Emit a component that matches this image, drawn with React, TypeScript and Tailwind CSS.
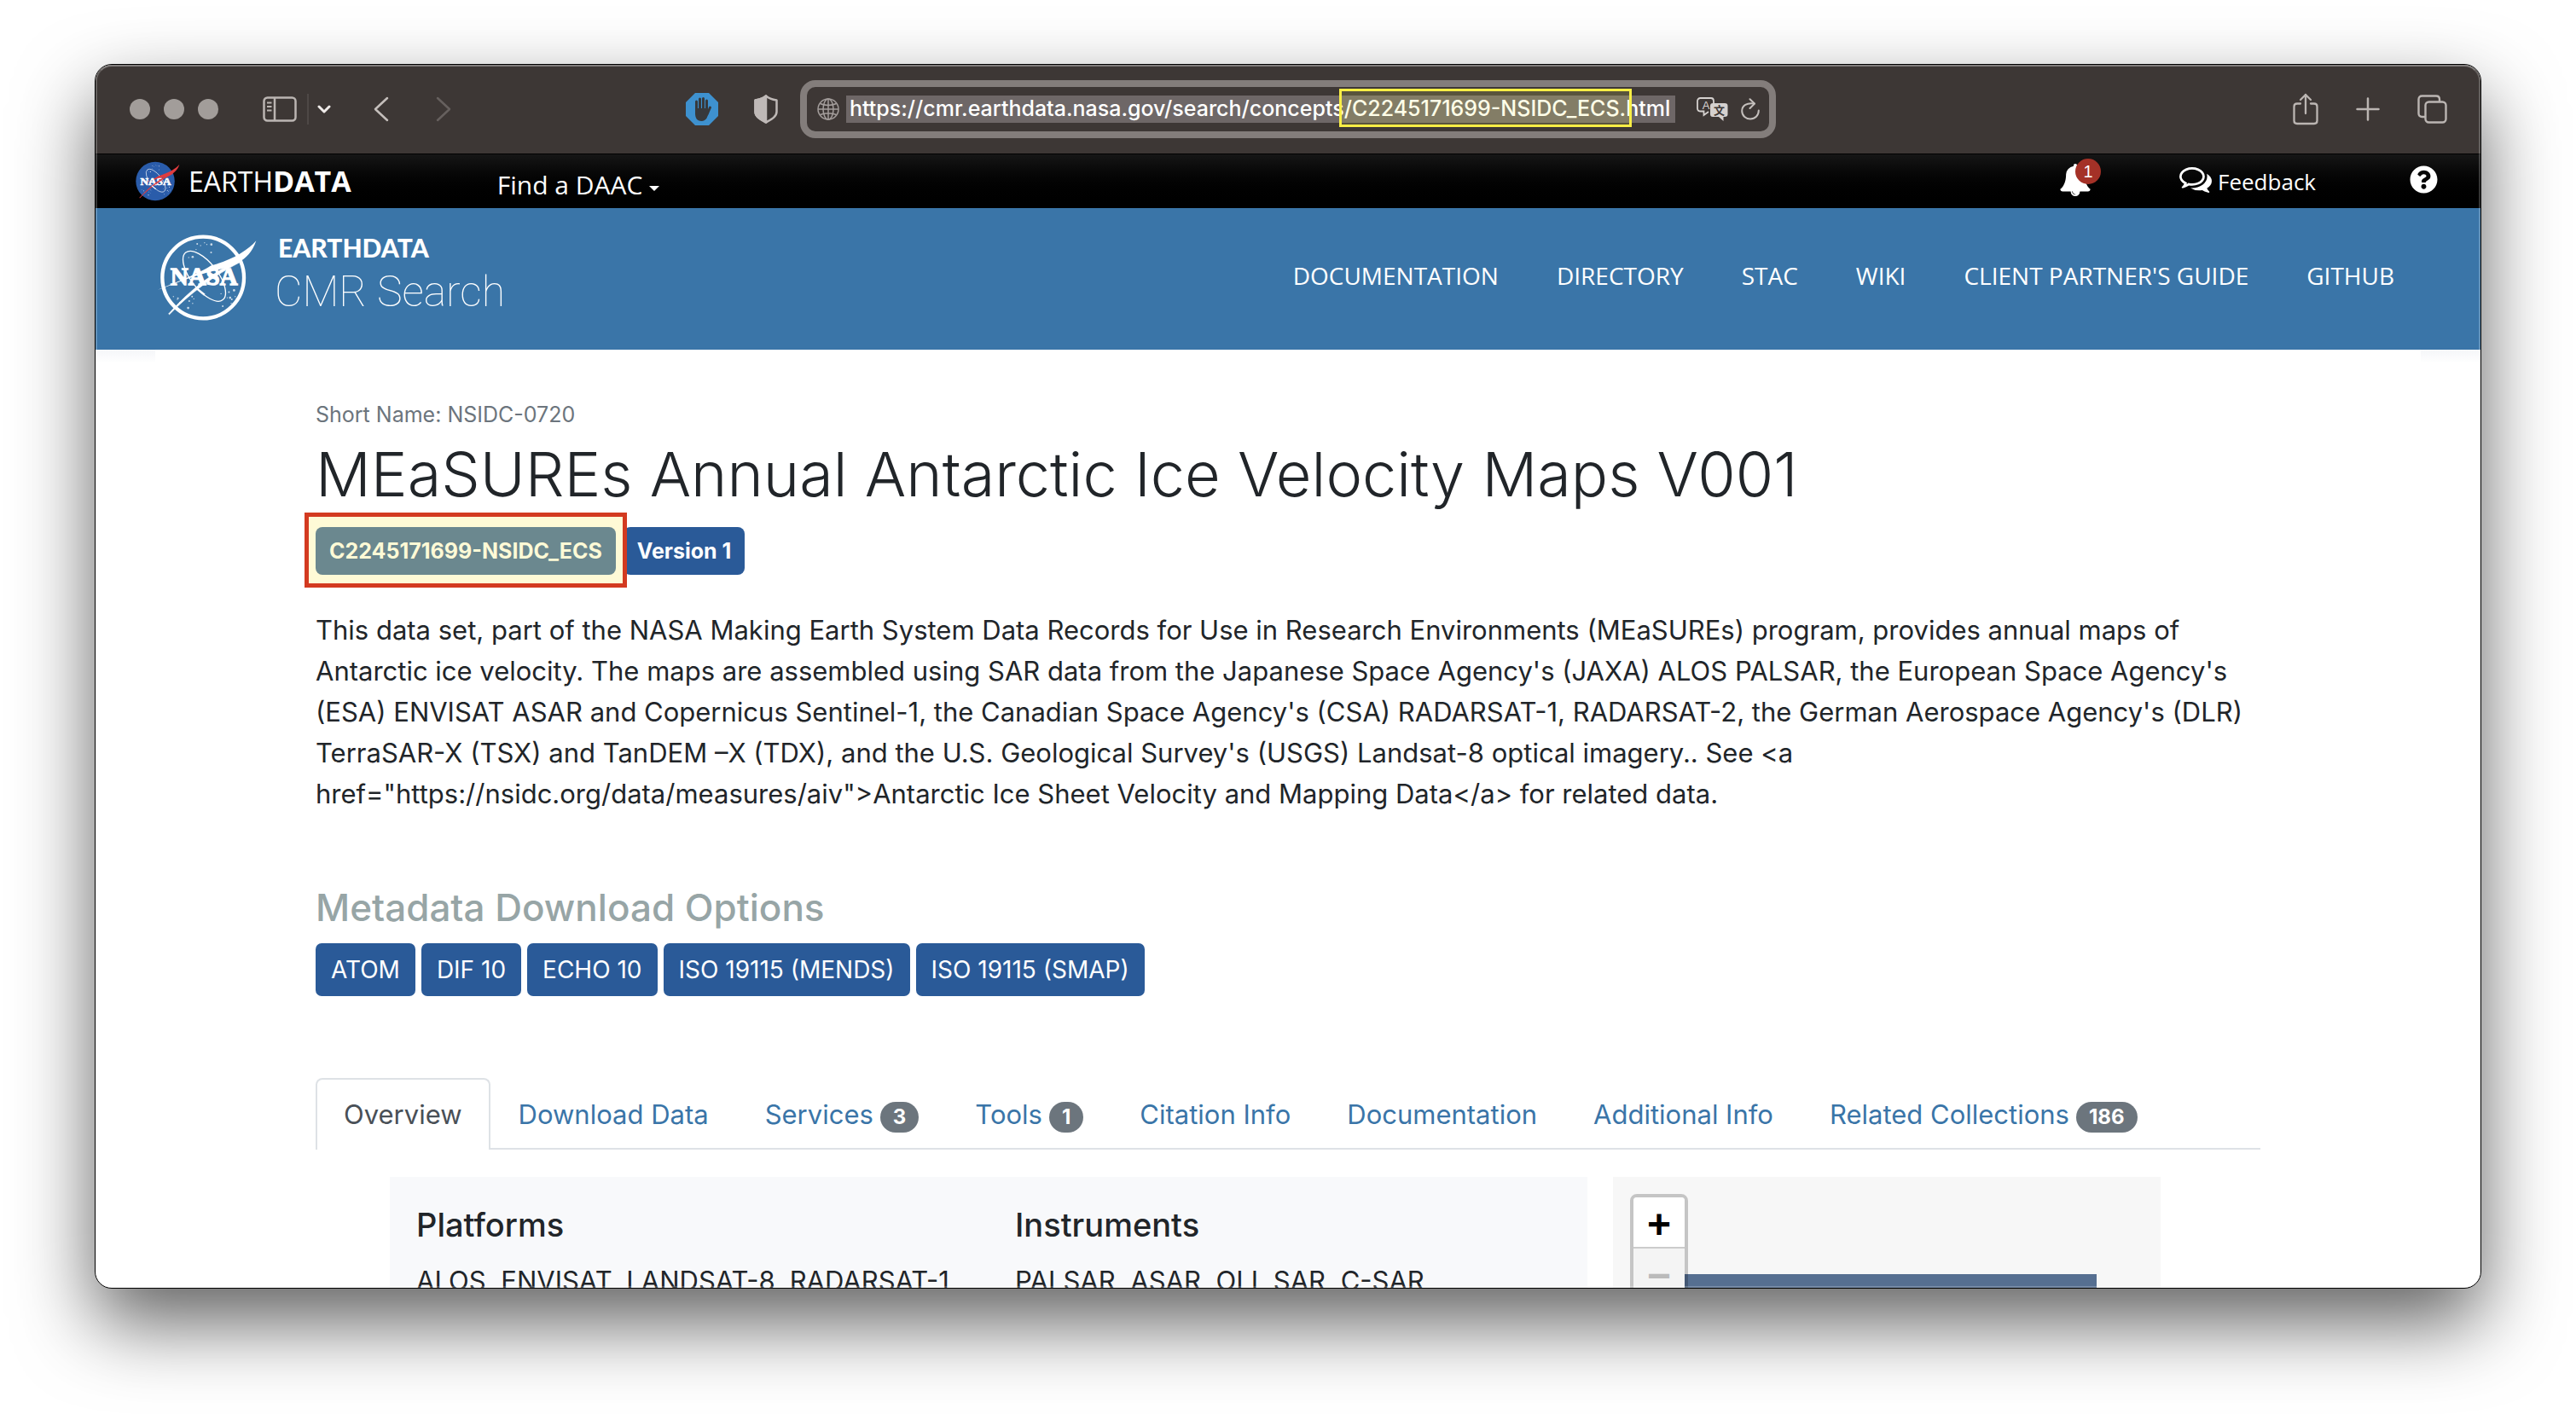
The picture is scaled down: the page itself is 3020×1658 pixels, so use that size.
import React from "react";
import { FaQuestionCircle } from "react-icons/fa";

const ABSTRACT =
  "This data set, part of the NASA Making Earth System Data Records for Use in Research Environments (MEaSUREs) program, provides annual maps of Antarctic ice velocity. The maps are assembled using SAR data from the Japanese Space Agency's (JAXA) ALOS PALSAR, the European Space Agency's (ESA) ENVISAT ASAR and Copernicus Sentinel-1, the Canadian Space Agency's (CSA) RADARSAT-1, RADARSAT-2, the German Aerospace Agency's (DLR) TerraSAR-X (TSX) and TanDEM –X (TDX), and the U.S. Geological Survey's (USGS) Landsat-8 optical imagery.. See <a href=\"https://nsidc.org/data/measures/aiv\">Antarctic Ice Sheet Velocity and Mapping Data</a> for related data.";

const NAV = ["DOCUMENTATION", "DIRECTORY", "STAC", "WIKI", "CLIENT PARTNER'S GUIDE", "GITHUB"];
const DOWNLOADS = ["ATOM", "DIF 10", "ECHO 10", "ISO 19115 (MENDS)", "ISO 19115 (SMAP)"];
const TABS: { label: string; count?: number }[] = [
  { label: "Overview" },
  { label: "Download Data" },
  { label: "Services", count: 3 },
  { label: "Tools", count: 1 },
  { label: "Citation Info" },
  { label: "Documentation" },
  { label: "Additional Info" },
  { label: "Related Collections", count: 186 },
];

const STARS = [
  [142, 36, 3], [154, 42, 2], [168, 32, 2], [176, 38, 2], [192, 38, 4], [138, 56, 2], [191, 66, 3], [126, 82, 4], [112, 84, 2],
  [58, 222, 2], [74, 228, 3], [80, 242, 2], [72, 232, 2], [114, 238, 3], [124, 222, 3], [130, 230, 2], [110, 262, 4], [126, 246, 2],
  [226, 212, 2], [254, 206, 3], [258, 226, 4], [272, 200, 4], [264, 232, 3], [276, 222, 2], [232, 256, 3], [248, 226, 2], [262, 246, 2], [280, 230, 2],
];

const WING = "M3 198C60 175 150 140 190 113C260 95 320 60 350 25C337 66 312 88 290 100C250 122 200 130 160 142C100 160 60 178 3 198Z";

function Meatball({ color, className }: { color?: boolean; className: string }) {
  const wing = color ? "#e03c3f" : "#fff";
  return (
    <svg viewBox="0 0 352 310" className={className} role="img" aria-label="NASA">
      {color ? (
        <circle cx="163" cy="155" r="150" fill="#2a5caa" />
      ) : (
        <circle cx="163" cy="155" r="144" fill="none" stroke="#fff" strokeWidth="13" />
      )}
      {STARS.map(([x, y, r]) => (
        <circle key={`${x}-${y}`} cx={x} cy={y} r={r} fill="#fff" opacity="0.75" />
      ))}
      <ellipse cx="167" cy="150" rx="47" ry="106" transform="rotate(-38 167 150)" fill="none" stroke="#fff" strokeWidth="4" />
      {color && <path d={WING} fill={wing} />}
      <text x="166" y="182" textAnchor="middle" fontSize="87" fontWeight="700" fill="#fff" stroke="#fff" strokeWidth="4" fontFamily="'Liberation Serif', serif">
        NASA
      </text>
      {!color && <path d={WING} fill={wing} />}
      <path d="M41 283C110 205 190 140 292 90L298 98C200 148 115 212 44 285Z" fill={wing} stroke={wing} strokeWidth="2" />
      <path d="M136 190L168 216" stroke="#fff" strokeWidth="7" />
    </svg>
  );
}

function HandBlocker() {
  return (
    <svg viewBox="0 0 38 38" className="h-[38px] w-[38px]" aria-hidden="true">
      <path d="M11 0H27L38 11V27L27 38H11L0 27V11Z" fill="#3e91cf" />
      <g stroke="#37393c" strokeWidth="3" strokeLinecap="round" fill="none">
        <path d="M12.500 20V10M16.500 18V7M20.500 18V6.500M24.500 19V9" />
        <path d="M25 25L28.500 17" />
      </g>
      <path d="M11 18H26V22L27 21C26 28 24 33 18.500 33C13 33 11 29 11 24Z" fill="#37393c" />
    </svg>
  );
}

function Toolbar() {
  return (
    <div className="grid h-[104px] shrink-0 grid-cols-[1fr_auto_1fr] items-center bg-[#3d3735] text-[#bbb5b2]">
      <div className="flex items-center pl-10 pr-[26px]">
        <div className="flex gap-4">
          <button aria-label="Close" className="h-6 w-6 rounded-full bg-[#a29d9a]" />
          <button aria-label="Minimize" className="h-6 w-6 rounded-full bg-[#a29d9a]" />
          <button aria-label="Zoom" className="h-6 w-6 rounded-full bg-[#a29d9a]" />
        </div>
        <button aria-label="Sidebar" className="ml-[52px]">
          <svg viewBox="0 0 40 30" className="h-[30px] w-10" fill="none" stroke="currentColor" strokeWidth="2.500">
            <rect x="1.500" y="1.500" width="37" height="27" rx="4" />
            <path d="M14 1.500V28.500" />
            <path d="M5 7.500H10.500M5 12H10.500M5 16.500H10.500" strokeWidth="2" />
          </svg>
        </button>
        <span className="ml-3 h-9 w-0.5 bg-[#4e4846]" />
        <button aria-label="Tab groups" className="ml-[10px]">
          <svg viewBox="0 0 16 10" className="h-[10px] w-4" fill="none" stroke="#f0ecea" strokeWidth="3" strokeLinecap="round" strokeLinejoin="round">
            <path d="M2 2L8 8L14 2" />
          </svg>
        </button>
        <button aria-label="Back" className="ml-[50px]">
          <svg viewBox="0 0 18 30" className="h-[30px] w-[18px]" fill="none" stroke="#c4bebb" strokeWidth="2.500" strokeLinecap="round" strokeLinejoin="round">
            <path d="M16 2L2 15L16 28" />
          </svg>
        </button>
        <button aria-label="Forward" className="ml-[55px]">
          <svg viewBox="0 0 18 30" className="h-[30px] w-[18px]" fill="none" stroke="#66605e" strokeWidth="2.500" strokeLinecap="round" strokeLinejoin="round">
            <path d="M2 2L16 15L2 28" />
          </svg>
        </button>
        <button aria-label="Content blocker" className="ml-auto">
          <HandBlocker />
        </button>
        <button aria-label="Privacy report" className="ml-[42px]">
          <svg viewBox="0 0 28 34" className="h-[34px] w-7" fill="none" stroke="#bfb9b7" strokeWidth="2.500" strokeLinejoin="round">
            <path d="M14 1.500C18 5 23 6 26.500 6.500V20C26.500 26 20 29 14 32.500C8 29 1.500 26 1.500 20V6.500C5 6 10 5 14 1.500Z" />
            <path d="M14 1.500C10 5 5 6 1.500 6.500V20C1.500 26 8 29 14 32.500Z" fill="#bfb9b7" />
          </svg>
        </button>
      </div>

      <div className="flex h-[68px] w-[1144px] items-center rounded-[18px] border-8 border-[#837d7b] pl-3 pr-[11px]">
        <svg viewBox="0 0 26 26" className="h-[26px] w-[26px]" fill="none" stroke="#a39d9b" strokeWidth="1.500" aria-hidden="true">
          <circle cx="13" cy="13" r="12" />
          <ellipse cx="13" cy="13" rx="6" ry="12" />
          <path d="M13 1V25M1 13H25M3.500 6.500C9 9 17 9 22.500 6.500M3.500 19.500C9 17 17 17 22.500 19.500" />
        </svg>
        <div className="relative ml-2 flex-1">
          <input
            aria-label="Address"
            readOnly
            value="https://cmr.earthdata.nasa.gov/search/concepts/C2245171699-NSIDC_ECS.html"
            className="block h-8 w-full bg-[#6e6767] pl-1 text-[25px] font-medium text-white outline-none"
          />
          <div className="pointer-events-none absolute -top-2 left-[578px] h-[45px] w-[343px] border-[3px] border-[#f8ee45] bg-[#ffff64]/15" />
        </div>
        <button aria-label="Translate" className="ml-[25px]">
          <svg viewBox="0 0 37 28" className="h-7 w-[37px]" fontFamily="'Liberation Sans', 'Noto Sans CJK SC', sans-serif">
            <path d="M4.500 1H17C19 1 20 2.500 20 4.500V7M14 17L8.500 21V16.500H5C2.500 16.500 1 15.500 1 13V4.500C1 2.500 2.500 1 4.500 1" fill="none" stroke="#d5d1cf" strokeWidth="1.800" />
            <text x="11" y="13.500" textAnchor="middle" fontSize="13" fill="#d5d1cf">A</text>
            <path d="M19 7H33C35.500 7 36.500 8 36.500 10V20C36.500 22 35.500 23 33 23H31.500V28L26 23H19C17 23 16 22 16 20V10C16 8 17 7 19 7Z" fill="#d5d1cf" />
            <text x="26.500" y="20" textAnchor="middle" fontSize="13" fontWeight="700" fill="#3d3735">文</text>
          </svg>
        </button>
        <button aria-label="Reload" className="ml-[15px]">
          <svg viewBox="0 0 22 26" className="h-[26px] w-[22px]" fill="none" stroke="#c4bfbc" strokeWidth="2" strokeLinecap="round" strokeLinejoin="round">
            <path d="M15.500 6.500C7 5 1.200 9 1.200 15C1.200 21 6 24.500 11 24.500C16.500 24.500 20.800 20.500 20.800 14.500" />
            <path d="M10.500 1.200L16 6.500L10.500 12" />
          </svg>
        </button>
      </div>

      <div className="flex items-center justify-end gap-11 pr-[39px]">
        <button aria-label="Share">
          <svg viewBox="0 0 30 38" className="h-[38px] w-[30px]" fill="none" stroke="currentColor" strokeWidth="2.300" strokeLinecap="round" strokeLinejoin="round">
            <path d="M9 12.500H5C3 12.500 1.500 14 1.500 16V32.500C1.500 34.500 3 36 5 36H25C27 36 28.500 34.500 28.500 32.500V16C28.500 14 27 12.500 25 12.500H21" />
            <path d="M15 24V2M9 8L15 2L21 8" />
          </svg>
        </button>
        <button aria-label="New tab">
          <svg viewBox="0 0 28 28" className="h-7 w-7" fill="none" stroke="currentColor" strokeWidth="2.500" strokeLinecap="round">
            <path d="M14 1.500V26.500M1.500 14H26.500" />
          </svg>
        </button>
        <button aria-label="Tab overview">
          <svg viewBox="0 0 35 34" className="h-[34px] w-[35px]" fill="none" stroke="currentColor" strokeWidth="2.400" strokeLinejoin="round">
            <rect x="9.500" y="8.500" width="24" height="24" rx="4" />
            <path d="M9 26H5.500C3 26 1.500 24.500 1.500 22V5.500C1.500 3 3 1.500 5.500 1.500H22C24.500 1.500 26 3 26 5.500V8" />
          </svg>
        </button>
      </div>
    </div>
  );
}

function TopBar() {
  return (
    <div className="flex h-16 shrink-0 items-center border-t border-black bg-linear-to-b from-[#161616] to-black pl-[45px] pr-[50px] font-['Open_Sans',sans-serif] text-white">
      <a href="#earthdata" className="flex items-center">
        <Meatball color className="h-[47px] w-[54px]" />
        <span className="ml-[10px] text-[32px] leading-[48px]">
          EARTH<span className="text-[34px] font-bold">DATA</span>
        </span>
      </a>
      <button className="ml-[171px] flex items-center gap-2 pt-2 text-[30px] leading-[40px]">
        Find a DAAC
        <svg viewBox="0 0 12 6" className="mt-2 h-[6px] w-3" fill="currentColor" aria-hidden="true">
          <path d="M0 0H12L6 6Z" />
        </svg>
      </button>
      <button aria-label="Notifications" className="relative ml-auto pb-1">
        <svg viewBox="64 0 1664 1792" className="h-[38px] w-[36px]" fill="currentColor">
          <path d="M912 1696q0-16-16-16-59 0-101.500-42.500t-42.500-101.500q0-16-16-16t-16 16q0 73 51.500 124.500t124.500 51.500q16 0 16-16zm816-288q0 52-38 90t-90 38h-448q0 106-75 181t-181 75-181-75-75-181h-448q-52 0-90-38t-38-90q50-42 91-88t85-119.500 74.500-158.500 50-206 19.500-260q0-152 117-282.500t307-158.500q-8-19-8-39 0-40 28-68t68-28 68 28 28 68q0 20-8 39 190 28 307 158.500t117 282.500q0 139 19.500 260t50 206 74.500 158.500 85 119.500 91 88z" />
        </svg>
        <span className="absolute -top-[6px] left-[18px] flex h-[30px] w-[30px] items-center justify-center rounded-full bg-[#a43127] font-['Liberation_Sans',sans-serif] text-xl">1</span>
      </button>
      <button className="ml-[104px] flex items-center gap-[7px] text-[26px] leading-[36px]">
        <svg viewBox="0 256 1792 1408" className="mb-1 h-[30px] w-[38px]" fill="currentColor" aria-hidden="true">
          <path d="M704 384q-153 0-286 52t-211.500 141-78.500 191q0 82 53 158t149 132l97 56-35 84q34-20 62-39l44-31 53 10q78 14 153 14 153 0 286-52t211.500-141 78.500-191-78.500-191-211.500-141-286-52zm0-128q191 0 353.500 68.500t256.500 186.500 94 257-94 257-256.500 186.500-353.500 68.500q-86 0-176-16-124 88-278 128-36 9-86 16h-3q-11 0-20.500-8t-11.500-21q-1-3-1-6.500t.5-6.500 2-6l2.500-5 3.500-5.500 4-5 4.500-5 4-4.500q5-6 23-25t26-29.500 22.500-29 25-38.500 20.500-44q-124-72-195-177t-71-224q0-139 94-257t256.500-186.500 353.500-68.500zm822 1169q10 24 20.500 44t25 38.500 22.500 29 26 29.500 23 25q1 1 4 4.500t4.500 5 4 5 3.500 5.500l2.500 5 2 6 .5 6.500-1 6.500q-3 14-13 22t-22 7q-50-7-86-16-154-40-278-128-90 16-176 16-271 0-472-132 58 4 88 4 161 0 309-45t264-129q125-92 192-212t67-254q0-77-23-152 129 71 204 178t75 230q0 120-71 224.500t-195 176.500z" />
        </svg>
        Feedback
      </button>
      <button aria-label="Help" className="ml-[110px] pb-1">
        <FaQuestionCircle className="h-[33px] w-[33px]" />
      </button>
    </div>
  );
}

function SiteHeader() {
  return (
    <header className="flex h-[166px] shrink-0 items-center justify-between bg-[#3a75a8] pl-[72px] pr-[101px] text-white">
      <a href="#cmr" className="flex items-center gap-[25px]">
        <Meatball className="-mt-1 h-[103px] w-[117px]" />
        <span className="flex flex-col pb-1">
          <span className="font-['Lato',sans-serif] text-[30px] font-black leading-[34px]">EARTHDATA</span>
          <span className="-ml-1 font-['Roboto',sans-serif] text-[50px] font-thin leading-[70px]">CMR Search</span>
        </span>
      </a>
      <nav className="flex gap-[68px] pb-2 font-['Open_Sans',sans-serif] text-[28px] leading-[40px]">
        {NAV.map((n) => (
          <a key={n} href="#nav">{n}</a>
        ))}
      </nav>
    </header>
  );
}

function HeaderShade() {
  return (
    <div className="flex h-4 shrink-0 justify-between" aria-hidden="true">
      <span className="w-[70px] bg-linear-to-b from-[#f5f6f9] to-white" />
      <span className="w-[70px] bg-linear-to-b from-[#f5f6f9] to-white" />
    </div>
  );
}

function Collection() {
  return (
    <main className="mx-auto w-full max-w-[2280px]">
      <p className="mt-[42px] text-[25px] leading-[36px] text-[#6c757d]">Short Name: NSIDC-0720</p>
      <h1 className="mt-1 text-[72px] font-light leading-[96px] text-[#212529]">MEaSUREs Annual Antarctic Ice Velocity Maps V001</h1>
      <div className="mt-[14px] flex gap-[9px] text-[25px] font-bold leading-[56px] text-white">
        <span className="relative rounded-lg bg-[#2a5a98] px-4">
          C2245171699-NSIDC_ECS
          <span className="pointer-events-none absolute -inset-x-[13px] -bottom-[15px] -top-[17px] border-[5px] border-[#d33a20] bg-[#fcef7b]/31" />
        </span>
        <span className="rounded-lg bg-[#2a5a98] px-4">Version 1</span>
      </div>
      <p className="mt-[41px] text-[31px] leading-[48px] text-[#212529]">{ABSTRACT}</p>

      <h2 className="mt-[83px] text-[44px] font-medium leading-[52px] text-[#97a5a6]">Metadata Download Options</h2>
      <div className="mt-4 flex gap-[7px]">
        {DOWNLOADS.map((d) => (
          <a key={d} href="#download" className="rounded-[7px] bg-[#2a5a98] px-[18px] text-[28px] leading-[62px] text-white">
            {d}
          </a>
        ))}
      </div>

      <div role="tablist" className="mt-24 flex border-b-2 border-[#dee2e6]">
        {TABS.map((t, i) => (
          <button
            key={t.label}
            role="tab"
            aria-selected={i === 0}
            className={
              i === 0
                ? "-mb-0.5 flex h-[84px] items-center rounded-t-lg border-2 border-b-0 border-[#dee2e6] bg-white px-[31px] text-[31px] text-[#495057]"
                : "flex h-[82px] items-center gap-2 border-x-2 border-transparent px-[31px] pt-1 text-[31px] text-[#3a75a8]"
            }
          >
            {t.label}
            {t.count !== undefined && (
              <span className="mt-[5px] rounded-full bg-[#6c757d] px-[15px] text-2xl font-bold leading-[36px] text-white">{t.count}</span>
            )}
          </button>
        ))}
      </div>

      <div role="tabpanel" className="ml-[87px] mr-[117px] mt-8 flex gap-[30px] text-[#212529]">
        <div className="grid flex-1 grid-cols-2 bg-[#f8f9fb] py-8">
          <section className="px-[31px]">
            <h3 className="text-[38px] font-medium leading-[48px]">Platforms</h3>
            <p className="mt-[18px] text-[31px] leading-[48px]">ALOS, ENVISAT, LANDSAT-8, RADARSAT-1,</p>
          </section>
          <section className="px-[31px]">
            <h3 className="text-[38px] font-medium leading-[48px]">Instruments</h3>
            <p className="mt-[18px] text-[31px] leading-[48px]">PALSAR, ASAR, OLI, SAR, C-SAR</p>
          </section>
        </div>
        <div className="relative h-[400px] w-[642px] bg-[#f7f7f7]">
          <div className="ml-[84px] mr-[75px] mt-[114px] h-[240px] bg-[#566f91]" />
          <div className="absolute left-5 top-5 w-[68px] overflow-hidden rounded-lg border-4 border-black/20 bg-clip-padding font-['Liberation_Sans',sans-serif] text-[48px] font-bold leading-[64px]">
            <button aria-label="Zoom in" className="block h-[60px] w-full border-b-2 border-[#ccc] bg-white text-black">+</button>
            <button aria-label="Zoom out" className="block h-[60px] w-full bg-[#f4f4f4] text-[#bbb]">−</button>
          </div>
        </div>
      </div>
    </main>
  );
}

export default function App() {
  return (
    <div className="flex h-screen flex-col overflow-hidden bg-white px-[111px] pb-[147px] pt-[75px] font-['Inter',sans-serif]">
      <div className="relative flex min-h-0 flex-1 flex-col overflow-hidden rounded-[20px] border border-black bg-white shadow-[0_40px_90px_rgba(0,0,0,0.62)]">
        <Toolbar />
        <TopBar />
        <SiteHeader />
        <HeaderShade />
        <Collection />
        <div className="pointer-events-none absolute inset-0 rounded-[19px] border-2 border-white/20 border-t-white/35" />
      </div>
    </div>
  );
}
